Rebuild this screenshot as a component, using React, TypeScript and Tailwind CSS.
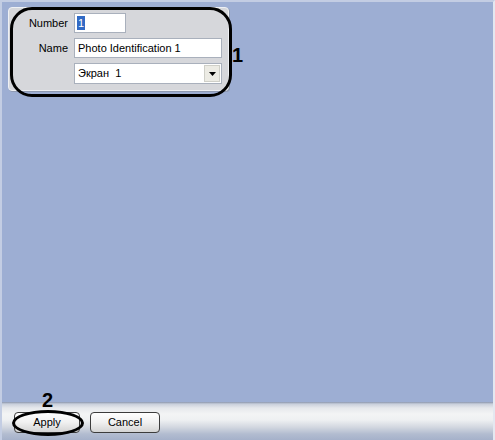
import React from "react";

export default function App() {
  const font = { fontFamily: '"Liberation Sans", Arial, sans-serif' };
  return (
    <div
      className="relative w-[495px] h-[440px] flex flex-col bg-[#9daed3] overflow-hidden border-l-[2px] border-t-[2px] border-r-[2px] border-l-[#c3cde3] border-t-[#c3cde3] border-r-[#e4e8f0]"
      style={font}
    >
      <div className="flex-1 pl-[6px] pt-[5px]">
        <div className="w-[221px] h-[84px] bg-[#d6d7db] rounded-[4px] border border-[#eef0f4] shadow-[1px_1px_0_#8e99b0] flex flex-col pt-[5px] gap-[5px] text-[11px] text-black">
          <div className="flex items-center h-[20px]">
            <div className="w-[59px] text-right">Number</div>
            <div className="ml-[6px] w-[52px] h-[20px] bg-white border border-[#a9b0bc] flex items-center pl-[2px]">
              <span className="bg-[#316ac5] text-white px-[1px] leading-[14px]">1</span>
            </div>
          </div>
          <div className="flex items-center h-[20px]">
            <div className="w-[59px] text-right">Name</div>
            <div className="ml-[6px] w-[148px] h-[20px] bg-white border border-[#a9b0bc] flex items-center pl-[3px]">
              Photo Identification 1
            </div>
          </div>
          <div className="flex items-center h-[21px]">
            <div className="w-[59px]" />
            <div className="ml-[6px] w-[148px] h-[21px] bg-white border border-[#a9b0bc] flex items-center pl-[3px]">
              <span className="flex-1">Экран&nbsp; 1</span>
              <div className="w-[16px] h-[17px] mr-[1px] bg-[#ecebe4] border border-[#cfcfc8] flex items-center justify-center">
                <svg width="7" height="4" viewBox="0 0 7 4">
                  <path d="M0 0H7L3.5 4Z" fill="#000" />
                </svg>
              </div>
            </div>
          </div>
        </div>
      </div>

      <div className="h-[38px] bg-[linear-gradient(to_bottom,#8a95ad_0px,#c9cfdb_2px,#e6e8ec_6px,#f3f4f5_12px,#eef0f2_18px,#d3d8e0_25px,#b2bcd0_32px,#a5b1ca_38px)] flex items-center gap-[10px] pl-[12px] pt-[2px]">
        <button className="w-[66px] h-[21px] rounded-[4px] border border-[#3c3c3c] bg-[linear-gradient(to_bottom,#ffffff,#f0f0f0_50%,#d4d4d4)] text-[11px] text-black flex items-center justify-center">
          Apply
        </button>
        <button className="w-[70px] h-[21px] rounded-[4px] border border-[#3c3c3c] bg-[linear-gradient(to_bottom,#ffffff,#f0f0f0_50%,#d4d4d4)] text-[11px] text-black flex items-center justify-center">
          Cancel
        </button>
      </div>

      {/* annotations */}
      <div className="absolute left-[8px] top-[5px] w-[222px] h-[90px] border-[3px] border-black rounded-[22px] pointer-events-none" />
      <div className="absolute left-[230px] top-[43px] text-[20px] font-bold text-black leading-none">1</div>
      <div className="absolute left-[10px] top-[408px] w-[72px] h-[26px] border-[3px] border-black rounded-[50%] pointer-events-none" />
      <div className="absolute left-[40px] top-[388px] text-[20px] font-bold text-black leading-none">2</div>
    </div>
  );
}
